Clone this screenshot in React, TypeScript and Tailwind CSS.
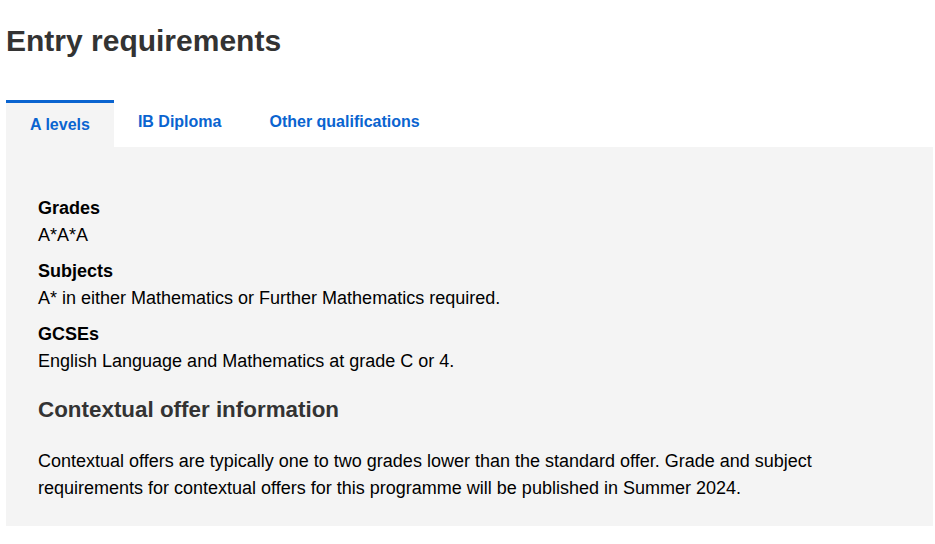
import React, { useState } from 'react';

const tabs = ['A levels', 'IB Diploma', 'Other qualifications'];

const requirements = [
  { label: 'Grades', value: 'A*A*A' },
  { label: 'Subjects', value: 'A* in either Mathematics or Further Mathematics required.' },
  { label: 'GCSEs', value: 'English Language and Mathematics at grade C or 4.' },
];

export default function App() {
  const [active, setActive] = useState(0);

  return (
    <div className="min-h-screen bg-white font-['Liberation_Sans',Arial,sans-serif] text-black">
      <div className="ml-[6px] w-[927px]">
        {/* Title */}
        <h1 className="pt-[23px] text-[30px] font-bold leading-[36px] text-[#333333]">
          Entry requirements
        </h1>

        {/* Tabs */}
        <div className="mt-[41px] flex items-start">
          {tabs.map((tab, i) => (
            <button
              key={tab}
              onClick={() => setActive(i)}
              className={
                i === active
                  ? 'border-t-[3px] border-[#0a64d0] bg-[#f4f4f4] px-[24px] pt-[10px] pb-[10px] text-[16px] font-bold leading-[24px] text-[#0a64d0]'
                  : 'px-[24px] pt-[10px] pb-[10px] text-[16px] font-bold leading-[24px] text-[#0a64d0]'
              }
            >
              {tab}
            </button>
          ))}
        </div>

        {/* Panel */}
        <div className="bg-[#f4f4f4] px-[32px] pt-[48px] pb-[24px]">
          <dl>
            {requirements.map((r) => (
              <div key={r.label}>
                <dt className="text-[18px] font-bold leading-[27px]">{r.label}</dt>
                <dd className="mb-[9px] text-[18px] leading-[27px]">{r.value}</dd>
              </div>
            ))}
          </dl>

          <h2 className="mt-[22px] text-[22.4px] font-bold leading-[26px] text-[#333333]">
            Contextual offer information
          </h2>

          <p className="mt-[25px] text-[18px] leading-[27px]">
            Contextual offers are typically one to two grades lower than the standard offer. Grade and subject
            requirements for contextual offers for this programme will be published in Summer 2024.
          </p>
        </div>
      </div>
    </div>
  );
}
